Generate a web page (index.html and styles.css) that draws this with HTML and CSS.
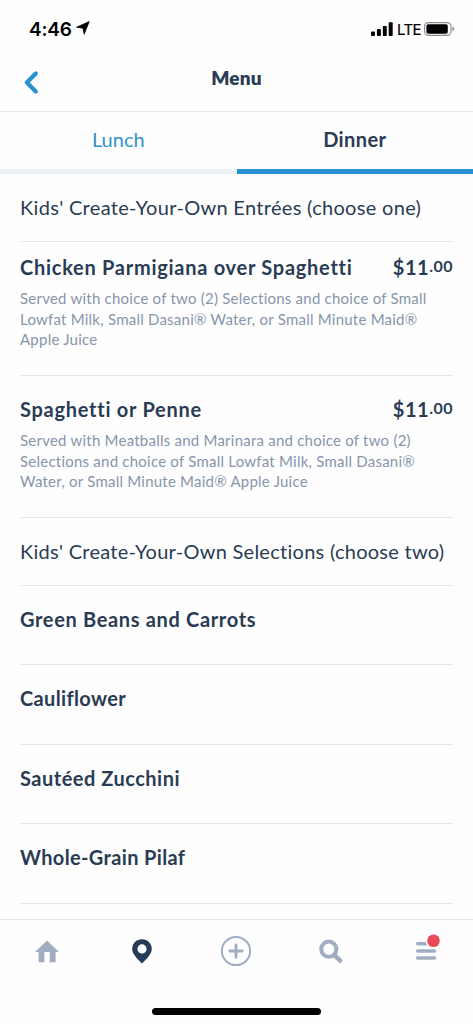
FILE: index.html
```html
<!DOCTYPE html>
<html lang="en">
<head>
<meta charset="utf-8">
<meta name="viewport" content="width=device-width, initial-scale=1">
<title>Menu</title>
<link rel="stylesheet" href="styles.css">
</head>
<body>
<div class="screen">
  <div class="status">
    <span class="time">4:46</span>
    <svg class="loc" width="14" height="14" viewBox="0 0 14 14"><path d="M13.2.6 8.2 13.2 7 7.2.6 6.2z" fill="#000" stroke="#000" stroke-width=".8" stroke-linejoin="round"/></svg>
    <svg class="signal" width="22" height="14" viewBox="0 0 22 14"><rect x="0" y="9.6" width="4" height="4.4" rx="1"/><rect x="5.9" y="7" width="4" height="7" rx="1"/><rect x="11.8" y="4" width="4" height="10" rx="1"/><rect x="17.7" y="0.3" width="4" height="13.7" rx="1"/></svg>
    <span class="lte">LTE</span>
    <svg class="battery" width="31" height="14" viewBox="0 0 31 14"><rect x=".6" y=".6" width="26.4" height="12.8" rx="3.6" fill="none" stroke="#8c8c8c" stroke-width="1.1"/><rect x="2.4" y="2.3" width="21.4" height="9.4" rx="1.8"/><path d="M28.3 4.8q2 .7 2 2.2t-2 2.2z" fill="#8c8c8c"/></svg>
  </div>
  <header class="header">
    <svg class="back" width="14" height="23" viewBox="0 0 14 23"><path d="M11.8 2.6 2.8 11.5l9 8.9" fill="none" stroke="#2591d1" stroke-width="4.2" stroke-linecap="round" stroke-linejoin="round"/></svg>
    <h1 class="title">Menu</h1>
  </header>
  <nav class="tabs">
    <div class="tab">Lunch</div>
    <div class="tab active">Dinner</div>
  </nav>
  <main class="list">
    <h2 class="section">Kids' Create-Your-Own Entrées (choose one)</h2>
    <article class="dish dish-short">
      <div class="row"><h3 class="name wide">Chicken Parmigiana over Spaghetti</h3><div class="price">$11<span class="cents">.00</span></div></div>
      <p class="desc">Served with choice of two (2) Selections and choice of Small<br>Lowfat Milk, Small Dasani® Water, or Small Minute Maid®<br>Apple Juice</p>
    </article>
    <article class="dish dish-tall">
      <div class="row"><h3 class="name wide">Spaghetti or Penne</h3><div class="price">$11<span class="cents">.00</span></div></div>
      <p class="desc">Served with Meatballs and Marinara and choice of two (2)<br>Selections and choice of Small Lowfat Milk, Small Dasani®<br>Water, or Small Minute Maid® Apple Juice</p>
    </article>
    <h2 class="section last">Kids' Create-Your-Own Selections (choose two)</h2>
    <div class="side short"><h3 class="name beans">Green Beans and Carrots</h3></div>
    <div class="side"><h3 class="name narrow">Cauliflower</h3></div>
    <div class="side short"><h3 class="name">Sautéed Zucchini</h3></div>
    <div class="side"><h3 class="name narrow">Whole-Grain Pilaf</h3></div>
  </main>
  <footer class="bottom">
    <div class="icons">
      <div class="cell"><svg width="32" height="32" viewBox="0 0 32 32"><path d="M16 5.5 28 17h-3.4v10.2h-5.8V17h-5.4v10.2H7.6V17H4z" fill="#a0aec1"/></svg></div>
      <div class="cell"><svg width="32" height="32" viewBox="0 0 32 32"><path fill-rule="evenodd" d="M16 4.2c-5.5 0-9.8 4.2-9.8 9.6 0 5.2 4.6 9.5 9.8 14.7 5.2-5.2 9.8-9.5 9.8-14.7 0-5.4-4.3-9.6-9.8-9.6zm0 5.1a4.6 4.6 0 1 1 0 9.2 4.6 4.6 0 0 1 0-9.2z" fill="#253b56"/></svg></div>
      <div class="cell"><svg width="32" height="32" viewBox="0 0 32 32" fill="none" stroke="#a0aec1"><circle cx="16" cy="16" r="14.1" stroke-width="2"/><path d="M16 9.8v12.4M9.8 16h12.4" stroke-width="2.8" stroke-linecap="round"/></svg></div>
      <div class="cell"><svg width="32" height="32" viewBox="0 0 32 32" fill="none" stroke="#a0aec1"><circle cx="13.8" cy="14.2" r="7.6" stroke-width="4"/><path d="m20.2 20.8 5 4.9" stroke-width="4.6" stroke-linecap="round"/></svg></div>
      <div class="cell"><svg width="32" height="32" viewBox="0 0 32 32"><path d="M7.7 8.8h16.8M7.7 16h16.8M7.7 23h16.8" stroke="#a0aec1" stroke-width="3.5" stroke-linecap="round"/><circle cx="23.5" cy="5.7" r="8" fill="#fefefe"/><circle cx="23.5" cy="5.7" r="6.3" fill="#e84a5a"/></svg></div>
    </div>
    <div class="home-bar"></div>
  </footer>
</div>
</body>
</html>
```
FILE: styles.css
```css
* { box-sizing: border-box; }
body { margin: 0; background: #fefefe; color: #2a3b54; font-family: Lato, "Open Sans", sans-serif; font-variant-ligatures: none; }
h1, h2, h3, p { margin: 0; }
svg { display: block; flex: none; overflow: visible; }
.screen { width: 473px; height: 1024px; display: flex; flex-direction: column; overflow: hidden; white-space: nowrap; }
.status { height: 58px; display: flex; align-items: center; padding: 0 18px 0 29px; color: #000; font-family: Inter, sans-serif; }
.time { font-size: 19px; font-weight: 600; width: 47px; letter-spacing: -0.2px; }
.loc { margin-top: -2px; }
.signal { margin-left: auto; }
.lte { font-size: 15px; width: 24px; margin: 0 3px 0 4px; letter-spacing: -0.6px; -webkit-text-stroke: 0.2px #000; }
.header { height: 54px; display: grid; grid-template-columns: 54px 1fr 54px; border-bottom: 1px solid #e6e9ed; padding-top: 8px; }
.back { margin: 5px 0 0 24px; }
.title { font: 800 19px/24px Lato, sans-serif; text-align: center; letter-spacing: 0.2px; }
.tabs { height: 62px; display: flex; font-size: 20px; line-height: 54px; text-align: center; }
.tab { flex: 1; border-bottom: 5px solid #eceff2; color: #3392cb; }
.active { border-color: #2591d1; color: #2a3b54; font-weight: 700; letter-spacing: 0.4px; }
.list { padding: 0 20px; flex: none; }
.section { height: 68px; border-bottom: 1px solid #e1e7f0; font-size: 20px; font-weight: 400; line-height: 67px; letter-spacing: 0.31px; }
.last { letter-spacing: 0.27px; }
.row { display: flex; justify-content: space-between; line-height: 28px; }
.name, .price { font-size: 20px; font-weight: 700; letter-spacing: 0.5px; }
.wide { letter-spacing: 0.73px; }
.beans { letter-spacing: 0.66px; }
.narrow { letter-spacing: 0.35px; }
.cents { font-size: 16px; position: relative; top: -3px; }
.dish { border-bottom: 1px solid #e1e7f0; }
.dish-short { height: 134px; padding-top: 12px; }
.dish-tall { height: 142px; padding-top: 20px; }
.desc { font-size: 15px; line-height: 20.6px; color: #8795ab; margin-top: 5px; letter-spacing: 0.23px; }
.row .name, .row .price { margin-top: -1px; }
.side { height: 80px; border-bottom: 1px solid #e1e7f0; line-height: 66px; }
.side.short { height: 79px; }
.bottom { margin-top: auto; height: 105px; border-top: 1px solid #dfe3e6; display: flex; flex-direction: column; align-items: center; }
.icons { width: 100%; height: 88px; display: flex; padding-top: 15px; }
.cell { flex: 1; display: flex; justify-content: center; }
.home-bar { width: 169px; height: 6.5px; border-radius: 4px; background: #000; }
```
